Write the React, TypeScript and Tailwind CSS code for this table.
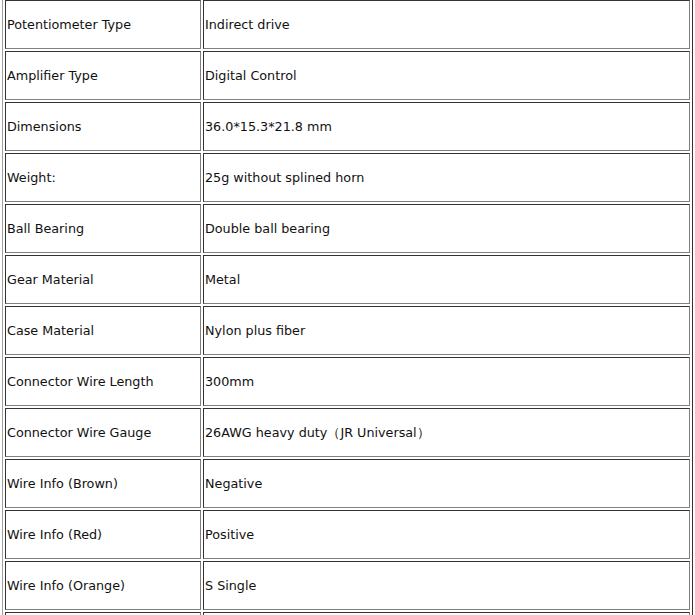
const rows: [string, string][] = [
  ["Potentiometer Type", "Indirect drive"],
  ["Amplifier Type", "Digital Control"],
  ["Dimensions", "36.0*15.3*21.8 mm"],
  ["Weight:", "25g without splined horn"],
  ["Ball Bearing", "Double ball bearing"],
  ["Gear Material", "Metal"],
  ["Case Material", "Nylon plus fiber"],
  ["Connector Wire Length", "300mm"],
  ["Connector Wire Gauge", "26AWG heavy duty\uFF08JR Universal\uFF09"],
  ["Wire Info (Brown)", "Negative"],
  ["Wire Info (Red)", "Positive"],
  ["Wire Info (Orange)", "S Single"],
  ["", ""],
];

const cell =
  "h-[49px] flex items-center pl-[1px] border-t border-l border-b border-r border-t-[#333333] border-l-[#333333] border-b-[#808080] border-r-[#808080] whitespace-nowrap overflow-hidden";

export default function App() {
  return (
    <div className="w-[695px] h-[615px] overflow-hidden bg-white">
      <div
        className="ml-[2px] w-[691px] border-l border-r border-l-[#a0a0a0] border-r-[#333333] px-[2px] grid grid-cols-[196px_487px] gap-[2px] text-[12.75px] text-[#111111]"
        style={{ fontFamily: '"DejaVu Sans", Verdana, sans-serif' }}
      >
        {rows.map(([k, v], i) => (
          <div key={i} className="contents">
            <div className={cell}>{k}</div>
            <div className={cell}>{v}</div>
          </div>
        ))}
      </div>
    </div>
  );
}
